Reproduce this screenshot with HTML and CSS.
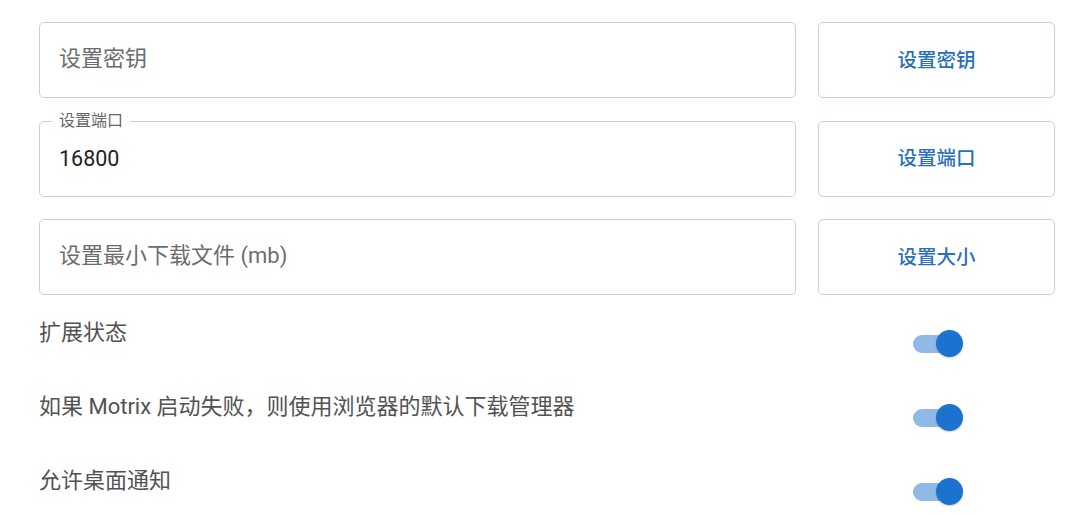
FILE: index.html
```html
<!DOCTYPE html>
<html lang="zh-CN">
<head>
    <meta charset="UTF-8">
    <title>设置</title>
    <link rel="stylesheet" href="styles.css">
</head>
<body>
    <div class="settings">
        <div class="field-row">
            <div class="field">
                <input type="text" class="field-input" placeholder="设置密钥">
            </div>
            <button type="button" class="outline-button">设置密钥</button>
        </div>

        <div class="field-row">
            <div class="field has-label">
                <span class="field-label">设置端口</span>
                <input type="text" class="field-input" value="16800">
            </div>
            <button type="button" class="outline-button">设置端口</button>
        </div>

        <div class="field-row">
            <div class="field">
                <input type="text" class="field-input" placeholder="设置最小下载文件 (mb)">
            </div>
            <button type="button" class="outline-button">设置大小</button>
        </div>

        <div class="switches">
            <div class="switch-row">
                <span class="switch-text">扩展状态</span>
                <div class="switch-cell"><span class="switch on"><span class="thumb"></span></span></div>
            </div>
            <div class="switch-row">
                <span class="switch-text">如果 Motrix 启动失败，则使用浏览器的默认下载管理器</span>
                <div class="switch-cell"><span class="switch on"><span class="thumb"></span></span></div>
            </div>
            <div class="switch-row">
                <span class="switch-text">允许桌面通知</span>
                <div class="switch-cell"><span class="switch on"><span class="thumb"></span></span></div>
            </div>
        </div>
    </div>
</body>
</html>
```

FILE: styles.css
```css
body {
    margin: 0;
    background-color: #fff;
    font-family: Roboto, "Noto Sans CJK SC", sans-serif;
}

.settings {
    width: 1016px;
    padding: 22px 0 0 39px;
}

.field-row {
    display: grid;
    grid-template-columns: 757px 237px;
    column-gap: 22px;
    margin-bottom: 22.5px;
}

.field {
    position: relative;
    height: 76px;
    border: 1px solid #cfcfcf;
    border-radius: 5px;
    box-sizing: border-box;
    display: flex;
    align-items: center;
}

.field-input {
    width: 100%;
    border: none;
    outline: none;
    background: transparent;
    padding: 0 19px;
    font-family: Roboto, "Noto Sans CJK SC", sans-serif;
    font-size: 21.5px;
    color: #222;
}

.field-input::placeholder {
    color: #6c6c6c;
    font-size: 22px;
}

.field-input:placeholder-shown {
    padding-bottom: 4px;
}

.field-label {
    position: absolute;
    top: -11px;
    left: 12px;
    padding: 0 7px;
    background-color: #fff;
    font-size: 16px;
    line-height: 20px;
    color: #666;
}

.outline-button {
    height: 76px;
    padding-bottom: 5px;
    border: 1px solid #c6d2df;
    border-radius: 5px;
    background-color: #fff;
    font-family: Roboto, "Noto Sans CJK SC", sans-serif;
    font-size: 19.5px;
    font-weight: 500;
    color: #2a70b8;
    cursor: pointer;
}

.switches {
    margin-top: -0.5px;
}

.switch-row {
    display: grid;
    grid-template-columns: 757px 237px;
    column-gap: 22px;
    height: 74px;
}

.switch-text {
    font-size: 22px;
    line-height: 32px;
    color: #525252;
}

.switch-cell {
    display: flex;
    justify-content: center;
    padding: 12px 0 0 3px;
}

.switch {
    position: relative;
    display: block;
    width: 50px;
    height: 30px;
}

.switch::before {
    content: "";
    position: absolute;
    left: 0;
    top: 6px;
    width: 44px;
    height: 18px;
    border-radius: 9px;
    background-color: #8fb9e6;
}

.switch .thumb {
    position: absolute;
    top: 1px;
    left: 23px;
    width: 27px;
    height: 27px;
    border-radius: 50%;
    background-color: #1b72cf;
    box-shadow: 0 1px 2px rgba(0, 0, 0, 0.2);
}
```
